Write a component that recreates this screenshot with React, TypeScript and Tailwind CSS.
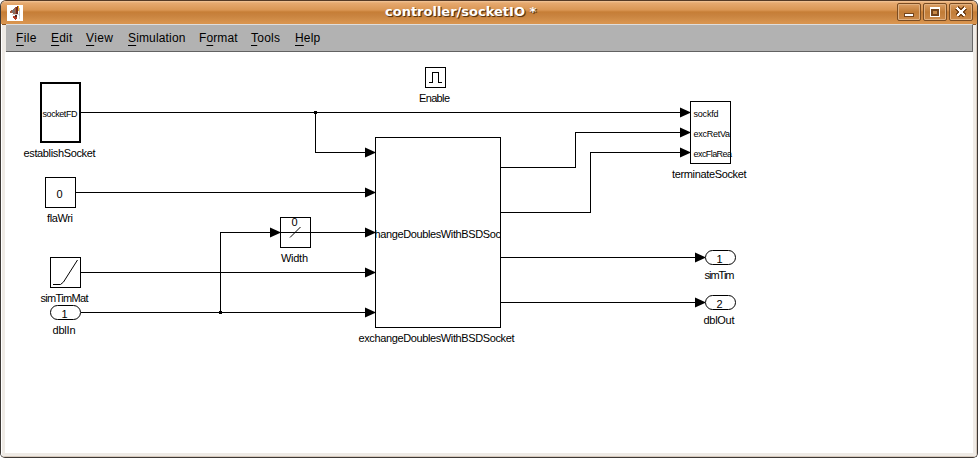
import React from "react";

const menus = [
  { pre: "", key: "F", post: "ile", box: "w-[35px]", text: "tracking-[0.4px]" },
  { pre: "", key: "E", post: "dit", box: "w-[35px]", text: "tracking-[0.2px]" },
  { pre: "", key: "V", post: "iew", box: "w-[42px]", text: "tracking-[0.4px]" },
  { pre: "", key: "S", post: "imulation", box: "w-[71px]", text: "tracking-[0.15px]" },
  { pre: "F", key: "o", post: "rmat", box: "w-[52px]", text: "tracking-[0.1px]" },
  { pre: "", key: "T", post: "ools", box: "w-[44px]", text: "tracking-[0.25px]" },
  { pre: "", key: "H", post: "elp", box: "w-[40px]", text: "tracking-[0.15px]" },
];

function WindowButton({ children }: { children: React.ReactNode }) {
  return (
    <button className="h-[18px] w-6 rounded-[2px] border border-[#7a4c22] bg-linear-to-b from-[#dc9f64] via-[#c17c36] to-[#cc8a4a] p-0 shadow-[inset_0_0_0_1px_#e0b080]">
      <svg width="22" height="16" shapeRendering="crispEdges" className="block">
        {children}
      </svg>
    </button>
  );
}

function TitleBar() {
  return (
    <header className="flex h-6 shrink-0 items-start justify-between border-b border-[#8a5523] bg-[linear-gradient(to_bottom,#f3c79b_0px,#e6a96f_2px,#da9654_9px,#c67e36_11px,#c98440_15px,#d9954f_22px)] pt-0.5 pr-1 pl-1.5">
      <svg width="16" height="16" className="mt-0.5 bg-white" shapeRendering="crispEdges">
        <path d="M2 7l3-2 4-3 2-1v8H8l-4-1z" fill="#a85a3c" />
        <path d="M5 5l3-2v6l-3-1z" fill="#7e6f69" />
        <path d="M9 2l2-1v9l-2-1z" fill="#6d2a20" />
        <path d="M11 1h1v5h-1z" fill="#efa51d" />
        <path d="M12 3h1v8h-1z" fill="#bfc1c3" />
        <path d="M5 9h7v1H5zM12 11h1v3h-1z" fill="#d8d8d8" />
        <path d="M6 11h4v2l-1 2H8l-2-3z" fill="#b53c25" />
        <path d="M8 10h2v2H8z" fill="#4c2720" />
      </svg>
      <h1 className="mt-px mr-auto ml-[362px] font-['DejaVu_Sans',sans-serif] text-[13px] leading-[15px] font-bold whitespace-pre text-white [text-shadow:1px_1px_1px_#5b3410,1px_1px_0_#704317]">
        controller/socketIO *
      </h1>
      <div className="flex gap-0.5">
        <WindowButton>
          <path d="M6 9h10v4H6z" fill="#74441b" />
          <path d="M7 10h8v2H7z" fill="#fff" />
        </WindowButton>
        <WindowButton>
          <path d="M6 3h10v10H6z" fill="#fff" />
          <path d="M7 5h8v7H7z" fill="#74441b" />
          <path d="M9 7h4v3H9z" fill="#c98946" />
        </WindowButton>
        <WindowButton>
          <path d="M7 4l8 8M15 4l-8 8" stroke="#74441b" strokeWidth="5" />
          <path d="M7 4l8 8M15 4l-8 8" stroke="#fff" strokeWidth="2.6" />
        </WindowButton>
      </div>
    </header>
  );
}

function MenuBar() {
  return (
    <nav className="ml-px flex h-7 shrink-0 border-t border-r border-b border-t-[#dedede] border-r-[#686868] border-b-[#626262] bg-[#b2b2b2] pt-[5px] pl-2.5 font-['Liberation_Sans',Arial,sans-serif] text-[12px] leading-4 text-black">
      {menus.map((m) => (
        <div key={m.key} className={m.box}>
          <span className={m.text}>
            {m.pre}
            <span className="underline decoration-1 underline-offset-3">{m.key}</span>
            {m.post}
          </span>
        </div>
      ))}
    </nav>
  );
}

type LabelProps = { x: number; y: number; w?: number; size?: number; children: string };

function Label({ x, y, w, size = 11, children }: LabelProps) {
  return (
    <text x={x} y={y} fontSize={size} textLength={w} lengthAdjust="spacing" fill="#000" stroke="none">
      {children}
    </text>
  );
}

function Arrow({ x, y }: { x: number; y: number }) {
  return (
    <path d={`M${x - 10} ${y - 5}v10l10-4.5v-1z`} fill="#000" stroke="none" shapeRendering="auto" />
  );
}

function Port({ x, y }: { x: number; y: number }) {
  return <rect x={x + 0.5} y={y + 0.5} width="30" height="14" rx="7" shapeRendering="auto" />;
}

function Diagram() {
  return (
    <svg
      viewBox="5 52 968 401"
      width="968"
      height="401"
      className="block font-['Liberation_Sans',Arial,sans-serif]"
      fill="none"
      stroke="#000"
      shapeRendering="crispEdges"
    >
      <defs>
        <clipPath id="exchangeFace">
          <rect x="376" y="138" width="124" height="189" />
        </clipPath>
      </defs>

      <path d="M81 112.5H690M315.5 112V152.5H375M76 192.5H375M81 272.5H375M81 312.5H375" />
      <path d="M220.5 312V232.5H375" />
      <path d="M501 167.5H575.5V132.5H690M501 212.5H590.5V152.5H690M501 257.5H705M501 302.5H705" />
      <path d="M314 111h3v3h-3zM219 311h3v3h-3z" fill="#000" stroke="none" />

      <Arrow x={375} y={152.5} />
      <Arrow x={375} y={192.5} />
      <Arrow x={375} y={232.5} />
      <Arrow x={375} y={272.5} />
      <Arrow x={375} y={312.5} />
      <Arrow x={280} y={232.5} />
      <Arrow x={690} y={112.5} />
      <Arrow x={690} y={132.5} />
      <Arrow x={690} y={152.5} />
      <Arrow x={705} y={257.5} />
      <Arrow x={705} y={302.5} />

      <rect x="41" y="83" width="39" height="59" strokeWidth="2" />
      <Label x={42.5} y={117} w={35} size={9}>socketFD</Label>
      <Label x={23.5} y={157} w={72}>establishSocket</Label>

      <rect x="45.5" y="177.5" width="30" height="30" />
      <Label x={56.5} y={198}>0</Label>
      <Label x={47} y={222} w={26}>flaWri</Label>

      <rect x="50.5" y="257.5" width="30" height="30" />
      <path d="M53 284.5h7.5l3-2.5 14-22" shapeRendering="auto" />
      <Label x={40.5} y={302} w={48}>simTimMat</Label>

      <Port x={50} y={305} />
      <Label x={61.5} y={318}>1</Label>
      <Label x={52.5} y={334} w={23}>dblIn</Label>

      <rect x="280.5" y="217.5" width="30" height="30" />
      <path d="M290 237.5l10.5-10.5" shapeRendering="auto" />
      <Label x={291.5} y={226}>0</Label>
      <Label x={281} y={262} w={27}>Width</Label>

      <rect x="425.5" y="67.5" width="20" height="20" />
      <path d="M429 82.5H432.5V72.5H438.5V82.5H442" />
      <Label x={419} y={102} w={31}>Enable</Label>

      <rect x="375.5" y="137.5" width="125" height="190" />
      <g clipPath="url(#exchangeFace)">
        <Label x={358.5} y={238} w={156}>exchangeDoublesWithBSDSocket</Label>
      </g>
      <Label x={358.5} y={342} w={156}>exchangeDoublesWithBSDSocket</Label>

      <rect x="690.5" y="101.5" width="40" height="62" />
      <Label x={693.5} y={117} w={25} size={9}>sockfd</Label>
      <Label x={693.5} y={137} w={36.5} size={9}>excRetVa</Label>
      <Label x={693.5} y={157} w={38.5} size={9}>excFlaRea</Label>
      <Label x={672} y={178} w={74.5}>terminateSocket</Label>

      <Port x={705} y={250} />
      <Label x={716.5} y={263}>1</Label>
      <Label x={704.5} y={279} w={30}>simTim</Label>

      <Port x={705} y={295} />
      <Label x={716.5} y={308}>2</Label>
      <Label x={703.5} y={324} w={31}>dblOut</Label>
    </svg>
  );
}

export default function App() {
  return (
    <div className="h-[458px] w-[978px] overflow-hidden bg-white">
      <div className="flex h-full flex-col overflow-hidden rounded-t-[6px] rounded-b-[5px] border border-[#3d3835] border-t-[#553a26] bg-[#efebe6]">
        <TitleBar />
        <div className="-mt-px flex flex-1 flex-col border-r border-b border-l border-r-[#d6c9bd] border-b-[#d6c9bd] border-l-white pr-[3px] pb-[3px] pl-[3px]">
          <MenuBar />
          <main className="flex-1 bg-white">
            <Diagram />
          </main>
        </div>
      </div>
    </div>
  );
}
